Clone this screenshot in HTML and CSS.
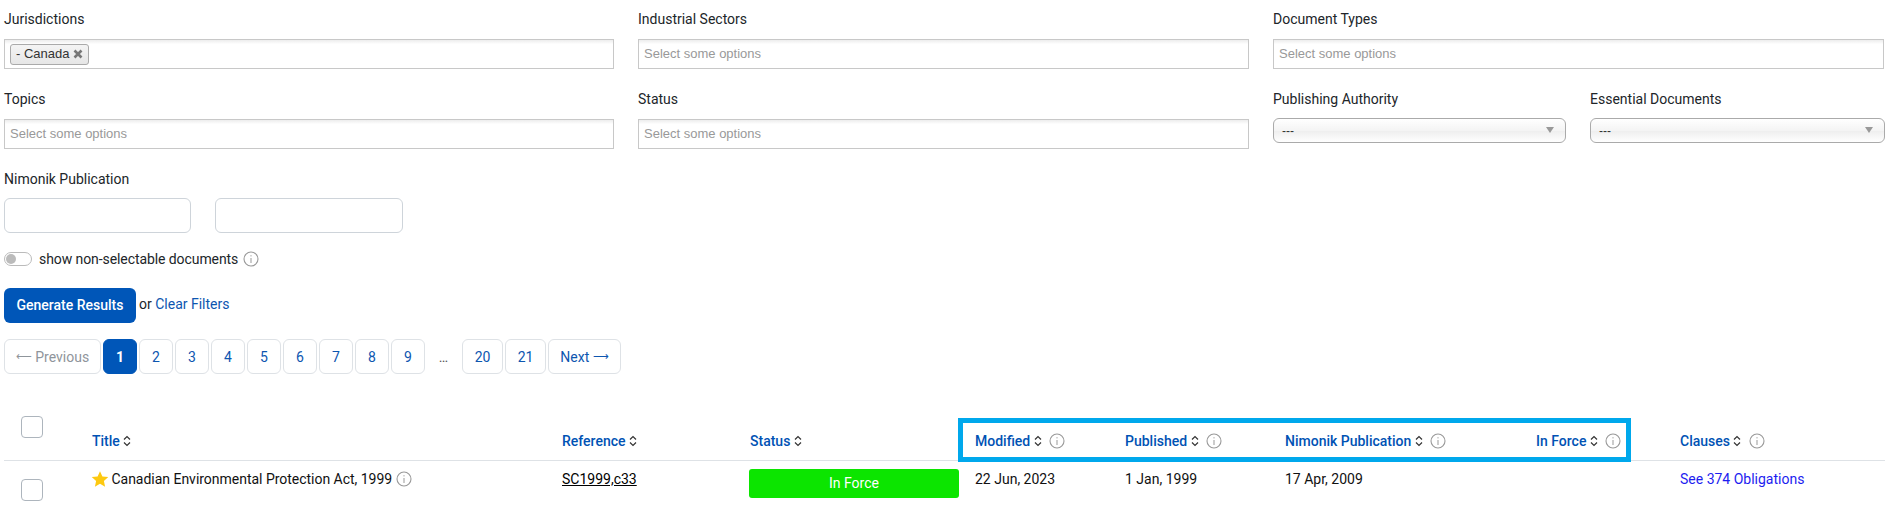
FILE: index.html
```html
<!DOCTYPE html>
<html lang="en">
<head>
<meta charset="utf-8">
<title>Documents</title>
<link rel="stylesheet" href="styles.css">
</head>
<body>
<svg class="defs" width="0" height="0" aria-hidden="true">
  <symbol id="info" viewBox="0 0 16 16">
    <circle cx="8" cy="8" r="7" fill="none" stroke="#999" stroke-width="1.1"/>
    <rect x="7.5" y="7" width="1" height="5" fill="#999"/>
    <rect x="7.5" y="4.2" width="1" height="1.2" fill="#999"/>
  </symbol>
  <symbol id="sort" viewBox="0 0 8 12">
    <path d="M1 4.5 L4 1.5 L7 4.5 M1 7.5 L4 10.5 L7 7.5" fill="none" stroke="#333" stroke-width="1.2"/>
  </symbol>
</svg>
<main class="page">
  <form class="filters">
    <div class="field">
      <label class="field-label">Jurisdictions</label>
      <div class="chosen"><span class="tag">- Canada <svg class="tag-x" viewBox="0 0 10 10"><path d="M1.5 1.5 L8.5 8.5 M8.5 1.5 L1.5 8.5" stroke="#777" stroke-width="2.6"/></svg></span></div>
    </div>
    <div class="field">
      <label class="field-label">Industrial Sectors</label>
      <div class="chosen placeholder">Select some options</div>
    </div>
    <div class="field">
      <label class="field-label">Document Types</label>
      <div class="chosen placeholder">Select some options</div>
    </div>
    <div class="field">
      <label class="field-label">Topics</label>
      <div class="chosen placeholder">Select some options</div>
    </div>
    <div class="field">
      <label class="field-label">Status</label>
      <div class="chosen placeholder">Select some options</div>
    </div>
    <div class="field-pair">
      <div class="field">
        <label class="field-label">Publishing Authority</label>
        <div class="select"><span>---</span><i class="caret"></i></div>
      </div>
      <div class="field">
        <label class="field-label">Essential Documents</label>
        <div class="select"><span>---</span><i class="caret"></i></div>
      </div>
    </div>
  </form>

  <div class="pub">
    <label class="field-label pub-label">Nimonik Publication</label>
    <div class="pub-inputs"><div class="date-input"></div><div class="date-input"></div></div>
  </div>

  <div class="toggle-row">
    <span class="toggle"><i class="knob"></i></span>
    <span class="toggle-text">show non-selectable documents</span>
    <svg class="info"><use href="#info"/></svg>
  </div>

  <div class="actions">
    <button class="btn-primary" type="button">Generate Results</button>
    <span class="or">or <a class="link" href="#">Clear Filters</a></span>
  </div>

  <nav class="pager">
    <span class="pg pg-prev"><span class="arrow">⟵</span>&nbsp;Previous</span>
    <span class="pg pg-num pg-active">1</span>
    <span class="pg pg-num">2</span>
    <span class="pg pg-num">3</span>
    <span class="pg pg-num">4</span>
    <span class="pg pg-num">5</span>
    <span class="pg pg-num">6</span>
    <span class="pg pg-num">7</span>
    <span class="pg pg-num">8</span>
    <span class="pg pg-num">9</span>
    <span class="pg-gap">…</span>
    <span class="pg pg-wide">20</span>
    <span class="pg pg-wide">21</span>
    <span class="pg pg-next">Next&nbsp;<span class="arrow">⟶</span></span>
  </nav>

  <section class="results">
    <table class="docs">
      <colgroup>
        <col class="c-check"><col class="c-title"><col class="c-ref"><col class="c-status"><col class="c-mod"><col class="c-pub"><col class="c-nim"><col class="c-force"><col class="c-clauses">
      </colgroup>
      <thead>
        <tr>
          <th class="th-check"><span class="box"></span></th>
          <th>Title <svg class="sort"><use href="#sort"/></svg></th>
          <th>Reference <svg class="sort"><use href="#sort"/></svg></th>
          <th>Status <svg class="sort"><use href="#sort"/></svg></th>
          <th>Modified <svg class="sort"><use href="#sort"/></svg> <svg class="info"><use href="#info"/></svg></th>
          <th>Published <svg class="sort"><use href="#sort"/></svg> <svg class="info"><use href="#info"/></svg></th>
          <th>Nimonik Publication <svg class="sort"><use href="#sort"/></svg> <svg class="info"><use href="#info"/></svg></th>
          <th>In Force <svg class="sort"><use href="#sort"/></svg> <svg class="info"><use href="#info"/></svg></th>
          <th>Clauses <svg class="sort"><use href="#sort"/></svg> <svg class="info"><use href="#info"/></svg></th>
        </tr>
      </thead>
      <tbody>
        <tr>
          <td class="td-check"><span class="box"></span></td>
          <td class="td-title"><svg class="star" viewBox="0 0 24 24"><path d="M12 1.5 L15.2 8.6 L23 9.4 L17.2 14.6 L18.8 22.3 L12 18.4 L5.2 22.3 L6.8 14.6 L1 9.4 L8.8 8.6 Z" fill="#fdc911"/></svg> Canadian Environmental Protection Act, 1999 <svg class="info"><use href="#info"/></svg></td>
          <td><a class="ref" href="#">SC1999,c33</a></td>
          <td class="td-status"><span class="pill">In Force</span></td>
          <td>22 Jun, 2023</td>
          <td>1 Jan, 1999</td>
          <td>17 Apr, 2009</td>
          <td></td>
          <td><a class="oblig" href="#">See 374 Obligations</a></td>
        </tr>
      </tbody>
    </table>
    <div class="highlight"></div>
  </section>
</main>
</body>
</html>
```

FILE: styles.css
```css
* { box-sizing: border-box; }
html, body { margin: 0; height: 509px; overflow: hidden; background: #fff; }
body { font-family: Roboto, "Liberation Sans", sans-serif; font-size: 14px; line-height: 20px; color: #212529; }
.defs { position: absolute; }
.page { padding: 0 2px 0 4px; }

.filters { display: grid; grid-template-columns: 610px 611px 611px; column-gap: 24px; }
.field { padding-top: 9px; height: 80px; min-width: 0; }
.field-label { display: block; height: 20px; margin-bottom: 10px; }
.field-pair { display: grid; grid-template-columns: 293px 295px; column-gap: 24px; }

.chosen { height: 30px; border: 1px solid #c8c8c8; background: linear-gradient(#eee 1%, #fff 15%); padding: 0 5px; font-family: "Liberation Sans", Arial, sans-serif; font-size: 13px; line-height: 28px; display: flex; align-items: center; }
.placeholder { color: #999; }
.tag { display: inline-flex; align-items: center; gap: 4px; height: 21px; padding: 0 5px; border: 1px solid #aaa; border-radius: 3px; background: linear-gradient(#f4f4f4, #e6e6e6); color: #333; }
.tag-x { width: 10px; height: 10px; }

.select { height: 25px; margin-top: -1px; border: 1px solid #aaa; border-radius: 6px; background: linear-gradient(#fff, #f4f4f4 50%, #eee 52%, #fff); display: flex; align-items: center; justify-content: space-between; padding: 0 11px 0 8px; font-family: "Liberation Sans", Arial, sans-serif; font-size: 12px; color: #333; }
.caret { width: 0; height: 0; border-left: 4px solid transparent; border-right: 4px solid transparent; border-top: 6px solid #999; margin-bottom: 1px; }

.pub { height: 74px; padding-top: 9px; }
.pub-label { margin-bottom: 9px; }
.pub-inputs { display: flex; gap: 24px; }
.date-input { width: 187px; height: 35px; border: 1px solid #ced4da; border-radius: 6px; background: #fff; }
.date-input + .date-input { width: 188px; }

.toggle-row { display: flex; align-items: center; gap: 7px; height: 20px; margin-top: 15px; }
.toggle-text { letter-spacing: -0.08px; margin-right: -2px; }
.toggle { width: 28px; height: 14px; border: 1px solid #bbb; border-radius: 7px; padding: 1px; display: block; }
.knob { display: block; width: 10px; height: 10px; border-radius: 50%; background: #bbb; }
.info { width: 16px; height: 16px; vertical-align: -3px; }

.actions { display: flex; align-items: center; gap: 3px; margin-top: 19px; height: 35px; }
.or { padding-bottom: 3px; }
.btn-primary { width: 132px; height: 35px; border: 0; border-radius: 6px; background: #0056b8; color: #fff; font: 500 14px/35px Roboto, sans-serif; padding: 0; }
.link { color: #0d56b0; text-decoration: none; }

.pager { display: flex; align-items: center; gap: 2px; margin-top: 16px; height: 35px; color: #0d56b0; }
.pg { display: flex; align-items: center; justify-content: center; height: 35px; border: 1px solid #dee2e6; border-radius: 6px; background: #fff; }
.pg-prev { width: 97px; color: #8f959b; }
.pg-num { width: 34px; }
.pg-active { background: #0056b8; border-color: #0056b8; color: #fff; font-weight: 700; }
.pg-gap { width: 33px; text-align: center; color: #555; }
.pg-wide { width: 41px; }
.pg-next { width: 73px; }
.arrow { font-size: 11px; }

.results { position: relative; margin-top: 36px; }
.docs { width: 100%; table-layout: fixed; border-collapse: collapse; }
.c-check { width: 88px; }
.c-title { width: 470px; }
.c-ref { width: 188px; }
.c-status { width: 225px; }
.c-mod { width: 150px; }
.c-pub { width: 160px; }
.c-nim { width: 251px; }
.c-force { width: 144px; }
thead tr { height: 50px; }
th { padding: 0 0 9px; text-align: left; vertical-align: bottom; font-weight: 500; font-size: 14px; color: #0052b4; border-bottom: 1px solid #dee2e6; white-space: nowrap; }
th .info { margin-left: 4px; }
.th-check, .td-check { padding-left: 17px; }
.th-check { vertical-align: top; padding-top: 6px; padding-bottom: 0; }
td { padding: 8px 0 0; vertical-align: top; color: #111; white-space: nowrap; }
.td-check { padding-top: 18px; }
.td-title { letter-spacing: -0.02px; }
.box { display: block; width: 22px; height: 22px; border: 1px solid #adb5bd; border-radius: 4px; background: #fff; }
.sort { width: 8px; height: 12px; vertical-align: -1px; }
.star { width: 18px; height: 18px; vertical-align: -4px; margin: 0 -1px 0 -1px; }
.ref { color: #000; text-decoration: underline; }
.pill { display: block; width: 210px; height: 29px; margin-left: -1px; background: #0ce500; border-radius: 3px; color: #fff; text-align: center; line-height: 29px; font-weight: 400; }
.oblig { color: #1d1df0; text-decoration: none; }

.highlight { position: absolute; left: 954px; top: 8px; width: 673px; height: 44px; border: 5px solid #00a8ec; pointer-events: none; }
```
